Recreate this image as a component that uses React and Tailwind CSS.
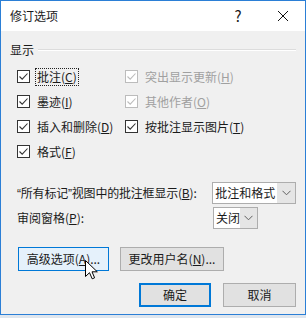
import React from 'react';

const font = { fontFamily: '"Noto Sans CJK SC", "Liberation Sans", sans-serif' };

function Check({ disabled }) {
  return (
    <span
      className={`flex h-[13px] w-[13px] shrink-0 items-center justify-center border bg-white ${
        disabled ? 'border-[#bcbcbc]' : 'border-[#333333]'
      }`}
    >
      <svg width="11" height="11" viewBox="0 0 11 11">
        <path
          d="M1.5 5.5 L4.2 8.2 L9.5 2.5"
          fill="none"
          stroke={disabled ? '#bcbcbc' : '#333333'}
          strokeWidth="1.1"
        />
      </svg>
    </span>
  );
}

function Opt({ label, hot, disabled, focus, w }) {
  return (
    <div className={`flex h-[25px] items-center gap-[6px] ${w}`}>
      <Check disabled={disabled} />
      <span
        className={`whitespace-nowrap px-[1px] leading-[16px] ${
          disabled ? 'text-[#a0a0a0]' : 'text-[#1a1a1a]'
        } ${focus ? 'outline-1 outline-dotted outline-[#222]' : ''}`}
      >
        {label}(<u>{hot}</u>)
      </span>
    </div>
  );
}

function Combo({ value, w }) {
  return (
    <div className={`flex h-[22px] border border-[#adadad] bg-white ${w}`}>
      <span className="flex-1 whitespace-nowrap pl-[2px] leading-[20px] text-[#1a1a1a]">{value}</span>
      <span className="flex w-[18px] items-center justify-center bg-[#e5e5e5]">
        <svg width="9" height="6" viewBox="0 0 9 6">
          <path d="M0.5 0.8 L4.5 4.8 L8.5 0.8" fill="none" stroke="#606060" strokeWidth="1" />
        </svg>
      </span>
    </div>
  );
}

function Btn({ children, kind, w }) {
  const cls =
    kind === 'hover'
      ? 'border border-[#0078d7] bg-[#e5f1fb]'
      : kind === 'default'
      ? 'border-2 border-[#0078d7] bg-[#e1e1e1]'
      : 'border border-[#adadad] bg-[#e1e1e1]';
  return (
    <div
      className={`flex h-[24px] items-center justify-center whitespace-nowrap text-[#1a1a1a] ${cls} ${w}`}
    >
      {children}
    </div>
  );
}

const q = { fontFamily: '"Liberation Sans", sans-serif' };

export default function App() {
  return (
    <div className="h-[318px] w-[306px] bg-[#dfe6ee] text-[12px] leading-[16px]" style={font}>
      <div className="relative flex h-[315px] flex-col border border-[#2b7fd6] bg-[#f0f0f0]">
        {/* title bar */}
        <div className="flex h-[30px] shrink-0 items-center bg-white pl-[9px] text-[#1a1a1a]">
          <span className="flex-1">修订选项</span>
          <span className="w-[46px] text-center text-[15px]">?</span>
          <span className="flex w-[44px] justify-center">
            <svg width="12" height="12" viewBox="0 0 12 12">
              <path d="M1 1 L11 11 M11 1 L1 11" stroke="#111" strokeWidth="1" />
            </svg>
          </span>
        </div>

        <div className="flex flex-1 flex-col px-[9px] pt-[11px]">
          {/* group header */}
          <div className="flex items-center gap-[4px] text-[#1a1a1a]">
            <span>显示</span>
            <span className="flex-1 border-t border-b border-t-[#dcdcdc] border-b-white" />
          </div>

          <div className="mt-[6px] flex flex-col pl-[7px]">
            <div className="flex">
              <Opt label="批注" hot="C" focus w="w-[108px]" />
              <Opt label="突出显示更新" hot="H" disabled />
            </div>
            <div className="flex">
              <Opt label="墨迹" hot="I" w="w-[108px]" />
              <Opt label="其他作者" hot="O" disabled />
            </div>
            <div className="flex">
              <Opt label="插入和删除" hot="D" w="w-[108px]" />
              <Opt label="按批注显示图片" hot="T" />
            </div>
            <div className="flex">
              <Opt label="格式" hot="F" w="w-[108px]" />
            </div>
          </div>

          {/* combos */}
          <div className="mt-[18px] flex items-center pl-[7px] text-[#1a1a1a]">
            <span className="w-[196px] whitespace-nowrap tracking-[-0.2px]">
              <span style={q}>“</span>所有标记<span style={q}>”</span>视图中的批注框显示(<u>B</u>):
            </span>
            <Combo value="批注和格式" w="w-[84px]" />
          </div>
          <div className="mt-[3px] flex items-center pl-[7px] text-[#1a1a1a]">
            <span className="w-[196px] whitespace-nowrap">
              审阅窗格(<u>P</u>):
            </span>
            <Combo value="关闭" w="w-[45px]" />
          </div>

          {/* buttons */}
          <div className="mt-[18px] flex gap-[11px] pl-[8px]">
            <Btn kind="hover" w="w-[91px]">
              高级选项(<u>A</u>)...
            </Btn>
            <Btn w="w-[104px]">
              更改用户名(<u>N</u>)...
            </Btn>
          </div>
          <div className="mt-[12px] flex justify-end gap-[12px]">
            <Btn kind="default" w="w-[72px]">
              确定
            </Btn>
            <Btn w="w-[73px]">取消</Btn>
          </div>
        </div>

        {/* mouse cursor */}
        <svg
          className="absolute left-[84px] top-[259px]"
          width="13"
          height="20"
          viewBox="0 0 13 20"
        >
          <path
            d="M0.5 0.5 L0.5 16.5 L4.5 12.7 L7.2 18.8 L9.6 17.8 L7 11.8 L12.3 11.8 Z"
            fill="#fff"
            stroke="#000"
            strokeWidth="1"
          />
        </svg>
      </div>
    </div>
  );
}
